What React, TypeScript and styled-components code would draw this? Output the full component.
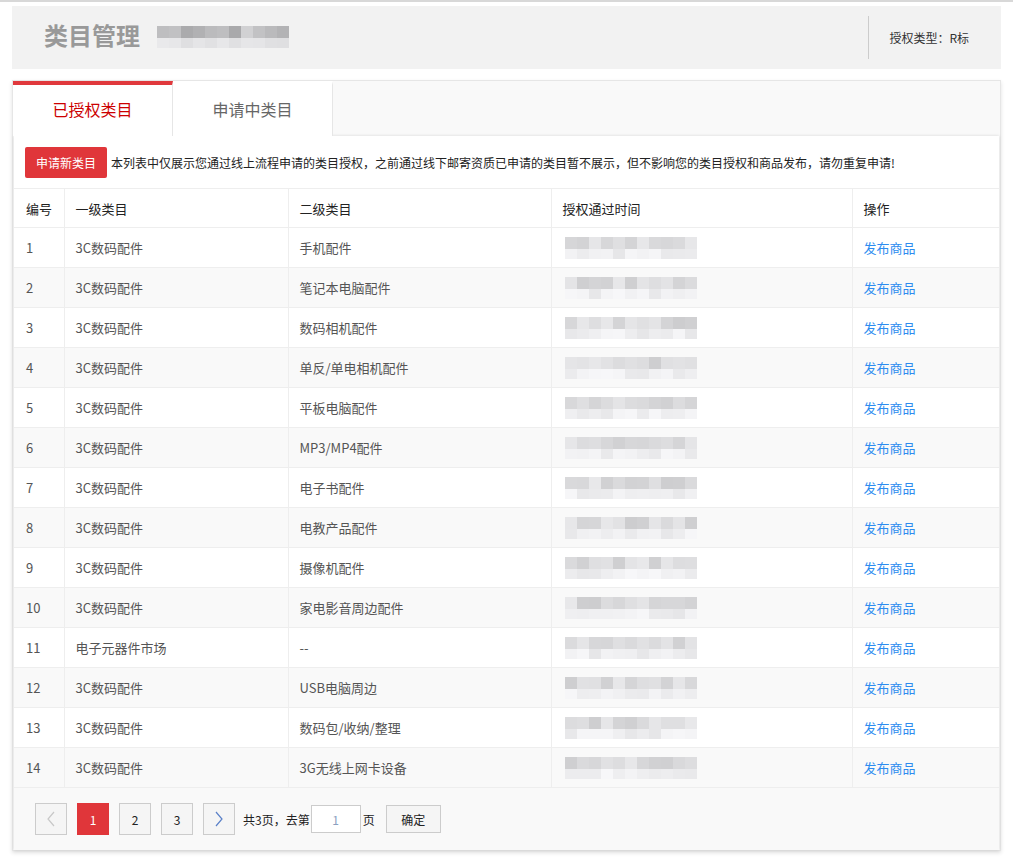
import React from 'react';
import styled, {createGlobalStyle} from 'styled-components';

const GlobalStyle = createGlobalStyle`
    html, body {
        margin: 0;
        padding: 0;
        background: #fff;
    }
    body {
        font-family: "Noto Sans CJK SC", "Noto Sans", sans-serif;
        color: #333;
    }
`;

const Page = styled.div`
    width: 1013px;
    min-height: 863px;
    border-top: 2px solid #d8d8d8;
    box-sizing: border-box;
    padding: 4px 12px 0 12px;
`;

const Header = styled.div`
    height: 63px;
    background: #f2f2f2;
    display: flex;
    align-items: center;
    padding: 0 32px;
`;

const Title = styled.h1`
    margin: 0 0 6px 0;
    font-size: 24px;
    line-height: 30px;
    font-weight: 700;
    color: #999;
`;

const TitleBlur = styled.div`
    margin-left: 17px;
    margin-bottom: 2px;
`;

const Spacer = styled.div`
    flex: 1;
`;

const Divider = styled.div`
    width: 1px;
    height: 43px;
    background: #ccc;
    margin-right: 20px;
`;

const AuthType = styled.span`
    font-size: 12px;
    line-height: 16px;
    color: #333;
`;

const Panel = styled.div`
    margin-top: 11px;
    border: 1px solid #e6e6e6;
    background: #f9f9f9;
    box-shadow: 0 2px 4px rgba(0, 0, 0, 0.12);
`;

const TabBar = styled.div`
    display: flex;
    height: 55px;
    background: #f9f9f9;
`;

const Tab = styled.div<{$active?: boolean}>`
    width: 160px;
    box-sizing: border-box;
    display: flex;
    align-items: center;
    justify-content: center;
    background: #fff;
    border-right: 1px solid #e6e6e6;
    border-top: 4px solid ${(p) => (p.$active ? '#e0383c' : 'transparent')};
    padding-bottom: 4px;
    font-size: 16px;
    line-height: 20px;
    color: ${(p) => (p.$active ? '#c00' : '#666')};
`;

const Content = styled.div`
    margin: 0 1px;
    background: #fff;
    box-shadow: 0 0 3px rgba(0, 0, 0, 0.14);
`;

const Notice = styled.div`
    height: 52px;
    display: flex;
    align-items: center;
    padding: 0 11px;
    font-size: 12px;
    color: #222;
`;

const ApplyButton = styled.button`
    width: 82px;
    height: 31px;
    border: none;
    border-radius: 2px;
    background: #e0363a;
    color: #fff;
    font-family: inherit;
    font-size: 12px;
    padding: 0;
    margin-right: 4px;
    cursor: pointer;
`;

const Table = styled.table`
    width: 100%;
    border-collapse: collapse;
    table-layout: fixed;
    font-size: 13px;
`;

const Th = styled.th<{$w: number}>`
    box-sizing: border-box;
    width: ${(p) => p.$w}px;
    height: 39px;
    padding: 0 11px;
    text-align: left;
    font-weight: 400;
    color: #222;
    border-bottom: 1px solid #eee;
    border-right: 1px solid #eee;
    &:first-child {
        padding-left: 12px;
    }
    &:last-child {
        border-right: none;
    }
`;

const HeadRow = styled.tr`
    border-top: 1px solid #eee;
`;

const Tr = styled.tr<{$alt: boolean}>`
    background: ${(p) => (p.$alt ? '#f9f9f9' : '#fff')};
`;

const Td = styled.td`
    height: 39px;
    padding: 0 11px;
    color: #555;
    border-bottom: 1px solid #eee;
    border-right: 1px solid #eee;
    white-space: nowrap;
    &:first-child {
        padding-left: 12px;
    }
    &:last-child {
        border-right: none;
    }
`;

const TimeCell = styled(Td)`
    padding-left: 13px;
`;

const Link = styled.a`
    color: #2d8cf0;
    text-decoration: none;
    cursor: pointer;
`;

const MosaicGrid = styled.div<{$cols: number}>`
    display: grid;
    grid-template-columns: repeat(${(p) => p.$cols}, 12px);
    grid-template-rows: 12px 10px;
    width: max-content;
`;

const Block = styled.div<{$c: number}>`
    background: rgb(${(p) => p.$c}, ${(p) => p.$c}, ${(p) => p.$c + 2});
`;

const Pager = styled.div`
    height: 62px;
    background: #f9f9f9;
    display: flex;
    align-items: center;
    padding: 0 21px;
    font-size: 12px;
    color: #222;
`;

const PageBtn = styled.div<{$active?: boolean}>`
    width: 32px;
    height: 32px;
    box-sizing: border-box;
    margin-right: 10px;
    display: flex;
    align-items: center;
    justify-content: center;
    border: 1px solid ${(p) => (p.$active ? '#e0363a' : '#ccc')};
    background: ${(p) => (p.$active ? '#e0363a' : '#f5f5f5')};
    color: ${(p) => (p.$active ? '#fff' : '#222')};
    font-size: 12px;
    &:nth-child(5) {
        margin-right: 8px;
    }
`;

const PagerText = styled.span`
    margin-left: 2px;
`;

const PageInput = styled.input`
    width: 50px;
    height: 28px;
    box-sizing: border-box;
    margin: 0 0 0 1px;
    border: 1px solid #ccc;
    background: #fff;
    text-align: center;
    font-family: inherit;
    font-size: 12px;
    color: #8aa0c0;
    padding: 0;
    outline: none;
`;

const ConfirmBtn = styled.button`
    width: 55px;
    height: 28px;
    margin-left: 11px;
    border: 1px solid #ccc;
    background: #f5f5f5;
    font-family: inherit;
    font-size: 12px;
    color: #222;
    padding: 0;
`;

function seeded(seed: number) {
    let s = seed;
    return () => {
        s = (s * 9301 + 49297) % 233280;
        return s / 233280;
    };
}

const Mosaic = ({seed, cols, top, bottom}: {seed: number; cols: number; top: [number, number]; bottom: [number, number]}) => {
    const rnd = seeded(seed);
    const topRow = Array.from({length: cols}, () => Math.round(top[0] + rnd() * (top[1] - top[0])));
    const bottomRow = Array.from({length: cols}, () => Math.round(bottom[0] + rnd() * (bottom[1] - bottom[0])));
    return (
        <MosaicGrid $cols={cols}>
            {topRow.map((c, i) => <Block key={`t${i}`} $c={c}/>)}
            {bottomRow.map((c, i) => <Block key={`b${i}`} $c={c}/>)}
        </MosaicGrid>
    );
};

const rows: [string, string][] = [
    ['3C数码配件', '手机配件'],
    ['3C数码配件', '笔记本电脑配件'],
    ['3C数码配件', '数码相机配件'],
    ['3C数码配件', '单反/单电相机配件'],
    ['3C数码配件', '平板电脑配件'],
    ['3C数码配件', 'MP3/MP4配件'],
    ['3C数码配件', '电子书配件'],
    ['3C数码配件', '电教产品配件'],
    ['3C数码配件', '摄像机配件'],
    ['3C数码配件', '家电影音周边配件'],
    ['电子元器件市场', '--'],
    ['3C数码配件', 'USB电脑周边'],
    ['3C数码配件', '数码包/收纳/整理'],
    ['3C数码配件', '3G无线上网卡设备'],
];

const Chevron = ({dir, color}: {dir: 'left' | 'right'; color: string}) => (
    <svg width="10" height="16" viewBox="0 0 10 16">
        <path
            d={dir === 'left' ? 'M8 1 L2 8 L8 15' : 'M2 1 L8 8 L2 15'}
            fill="none"
            stroke={color}
            strokeWidth="1.2"
        />
    </svg>
);

const App = () => (
    <>
        <GlobalStyle/>
        <Page>
            <Header>
                <Title>类目管理</Title>
                <TitleBlur>
                    <Mosaic seed={7} cols={11} top={[165, 215]} bottom={[222, 236]}/>
                </TitleBlur>
                <Spacer/>
                <Divider/>
                <AuthType>授权类型：R标</AuthType>
            </Header>

            <Panel>
                <TabBar>
                    <Tab $active>已授权类目</Tab>
                    <Tab>申请中类目</Tab>
                </TabBar>
                <Content>
                    <Notice>
                        <ApplyButton>申请新类目</ApplyButton>
                        本列表中仅展示您通过线上流程申请的类目授权，之前通过线下邮寄资质已申请的类目暂不展示，但不影响您的类目授权和商品发布，请勿重复申请!
                    </Notice>
                    <Table>
                        <thead>
                            <HeadRow>
                                <Th $w={50}>编号</Th>
                                <Th $w={224}>一级类目</Th>
                                <Th $w={263}>二级类目</Th>
                                <Th $w={301}>授权通过时间</Th>
                                <Th $w={147}>操作</Th>
                            </HeadRow>
                        </thead>
                        <tbody>
                            {rows.map(([first, second], idx) => (
                                <Tr key={idx} $alt={idx % 2 === 1}>
                                    <Td>{idx + 1}</Td>
                                    <Td>{first}</Td>
                                    <Td>{second}</Td>
                                    <TimeCell>
                                        <Mosaic seed={idx * 13 + 3} cols={11} top={[205, 232]} bottom={[230, 247]}/>
                                    </TimeCell>
                                    <Td><Link>发布商品</Link></Td>
                                </Tr>
                            ))}
                        </tbody>
                    </Table>
                    <Pager>
                        <PageBtn><Chevron dir='left' color='#c8c8c8'/></PageBtn>
                        <PageBtn $active>1</PageBtn>
                        <PageBtn>2</PageBtn>
                        <PageBtn>3</PageBtn>
                        <PageBtn><Chevron dir='right' color='#5a80c8'/></PageBtn>
                        <span>共3页，去第</span>
                        <PageInput defaultValue='1'/>
                        <PagerText>页</PagerText>
                        <ConfirmBtn>确定</ConfirmBtn>
                    </Pager>
                </Content>
            </Panel>
        </Page>
    </>
);

export default App;
